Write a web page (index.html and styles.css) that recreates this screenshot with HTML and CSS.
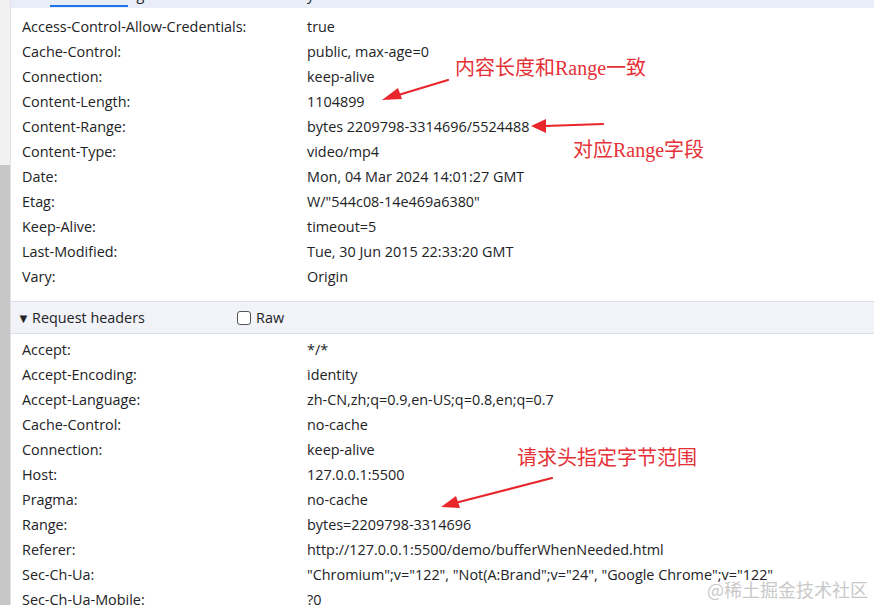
FILE: index.html
```html
<!DOCTYPE html>
<html lang="zh-CN">
<head>
<meta charset="utf-8">
<title>Headers</title>
<link rel="stylesheet" href="styles.css">
</head>
<body>
<div class="page">
  <div class="gutter"><div class="gutter-top"></div><div class="gutter-thumb"></div></div>
  <div class="main">
    <div class="topband"><span class="tab-line"></span><span class="cut-text">Transfer-Encoding</span><span class="cut-val">y</span></div>
    <div class="rows first">
      <div class="row"><span class="k">Access-Control-Allow-Credentials:</span><span class="v">true</span></div>
      <div class="row"><span class="k">Cache-Control:</span><span class="v">public, max-age=0</span></div>
      <div class="row"><span class="k">Connection:</span><span class="v">keep-alive</span></div>
      <div class="row"><span class="k">Content-Length:</span><span class="v">1104899</span></div>
      <div class="row"><span class="k">Content-Range:</span><span class="v">bytes 2209798-3314696/5524488</span></div>
      <div class="row"><span class="k">Content-Type:</span><span class="v">video/mp4</span></div>
      <div class="row"><span class="k">Date:</span><span class="v">Mon, 04 Mar 2024 14:01:27 GMT</span></div>
      <div class="row"><span class="k">Etag:</span><span class="v">W/"544c08-14e469a6380"</span></div>
      <div class="row"><span class="k">Keep-Alive:</span><span class="v">timeout=5</span></div>
      <div class="row"><span class="k">Last-Modified:</span><span class="v">Tue, 30 Jun 2015 22:33:20 GMT</span></div>
      <div class="row"><span class="k">Vary:</span><span class="v">Origin</span></div>
    </div>
    <div class="section-head">
      <span class="title"><span class="tri">▼</span>Request headers</span>
      <span class="raw"><span class="cb"></span>Raw</span>
    </div>
    <div class="rows second">
      <div class="row"><span class="k">Accept:</span><span class="v">*/*</span></div>
      <div class="row"><span class="k">Accept-Encoding:</span><span class="v">identity</span></div>
      <div class="row"><span class="k">Accept-Language:</span><span class="v">zh-CN,zh;q=0.9,en-US;q=0.8,en;q=0.7</span></div>
      <div class="row"><span class="k">Cache-Control:</span><span class="v">no-cache</span></div>
      <div class="row"><span class="k">Connection:</span><span class="v">keep-alive</span></div>
      <div class="row"><span class="k">Host:</span><span class="v">127.0.0.1:5500</span></div>
      <div class="row"><span class="k">Pragma:</span><span class="v">no-cache</span></div>
      <div class="row"><span class="k">Range:</span><span class="v">bytes=2209798-3314696</span></div>
      <div class="row"><span class="k">Referer:</span><span class="v">http://127.0.0.1:5500/demo/bufferWhenNeeded.html</span></div>
      <div class="row"><span class="k">Sec-Ch-Ua:</span><span class="v">"Chromium";v="122", "Not(A:Brand";v="24", "Google Chrome";v="122"</span></div>
      <div class="row"><span class="k">Sec-Ch-Ua-Mobile:</span><span class="v">?0</span></div>
    </div>
  </div>
</div>

<div class="note note1">内容长度和Range一致</div>
<div class="note note2">对应Range字段</div>
<div class="note note3">请求头指定字节范围</div>
<div class="watermark">@稀土掘金技术社区</div>

<svg class="arrows" width="874" height="605" viewBox="0 0 874 605">
  <g stroke="#e8262b" stroke-width="2.2" fill="#e8262b" stroke-linecap="round">
    <line x1="448" y1="80" x2="395" y2="96"/>
    <polygon points="382,100 398,88 402,99" stroke="none"/>
    <line x1="603" y1="124" x2="545" y2="126"/>
    <polygon points="531,126 546,119 546,133" stroke="none"/>
    <line x1="552" y1="478" x2="455" y2="503"/>
    <polygon points="441,507 456,496 460,508" stroke="none"/>
  </g>
</svg>
</body>
</html>
```

FILE: styles.css
```css
html, body {
  margin: 0;
  padding: 0;
  width: 874px;
  height: 605px;
  overflow: hidden;
  background: #ffffff;
}
body {
  font-family: "Open Sans", "Noto Sans", "Liberation Sans", sans-serif;
  font-size: 14.4px;
  color: #222326;
  position: relative;
}
.page {
  display: flex;
  height: 605px;
}
.gutter {
  width: 10px;
  flex: none;
  display: flex;
  flex-direction: column;
  border-right: 1px solid #e2e3ea;
}
.gutter-top {
  height: 165px;
  flex: none;
  background: #f1f1f1;
}
.gutter-thumb {
  flex: 1;
  background: #c7c7c7;
}
.main {
  flex: 1;
  display: flex;
  flex-direction: column;
  overflow: hidden;
}
.main > * {
  flex: none;
}
.topband {
  height: 8px;
  background: #e8edf8;
  position: relative;
  overflow: hidden;
}
.tab-line {
  position: absolute;
  left: 39px;
  top: 5px;
  width: 78px;
  height: 2px;
  background: #1a73e8;
}
.cut-text {
  position: absolute;
  left: 11px;
  top: -15px;
  line-height: 20px;
  color: #222326;
}
.cut-val {
  position: absolute;
  left: 296px;
  top: -15px;
  line-height: 20px;
}
.rows {
  display: flex;
  flex-direction: column;
}
.rows.first {
  padding-top: 6px;
  padding-bottom: 12px;
}
.rows.second {
  padding-top: 3px;
}
.row {
  display: flex;
  height: 25px;
  line-height: 25px;
  white-space: nowrap;
  padding-left: 11px;
  flex: none;
}
.k {
  width: 285px;
  flex: none;
}
.v {
  flex: none;
}
.section-head {
  height: 31px;
  border-top: 1px solid #dcdfe8;
  border-bottom: 1px solid #dcdfe8;
  background: #f1f3f9;
  display: flex;
  align-items: center;
  padding-left: 6px;
}
.title {
  width: 220px;
  display: flex;
  align-items: center;
}
.tri {
  font-size: 13px;
  margin-right: 5px;
  width: 10px;
}
.raw {
  display: flex;
  align-items: center;
}
.cb {
  width: 12px;
  height: 12px;
  border: 1.5px solid #555;
  border-radius: 3px;
  margin-right: 5px;
  background: #fff;
}
.note {
  position: absolute;
  font-family: "Liberation Serif", "Noto Sans CJK SC", serif;
  color: #e53238;
  font-size: 20px;
  line-height: 24px;
  white-space: nowrap;
}
.note1 { left: 455px; top: 56px; }
.note2 { left: 573px; top: 138px; }
.note3 { left: 517px; top: 446px; }
.watermark {
  position: absolute;
  left: 707px;
  top: 576px;
  font-family: "Noto Sans CJK SC", sans-serif;
  font-size: 18px;
  color: #c9c9c9;
  white-space: nowrap;
}
.arrows {
  position: absolute;
  left: 0;
  top: 0;
  pointer-events: none;
}
```
